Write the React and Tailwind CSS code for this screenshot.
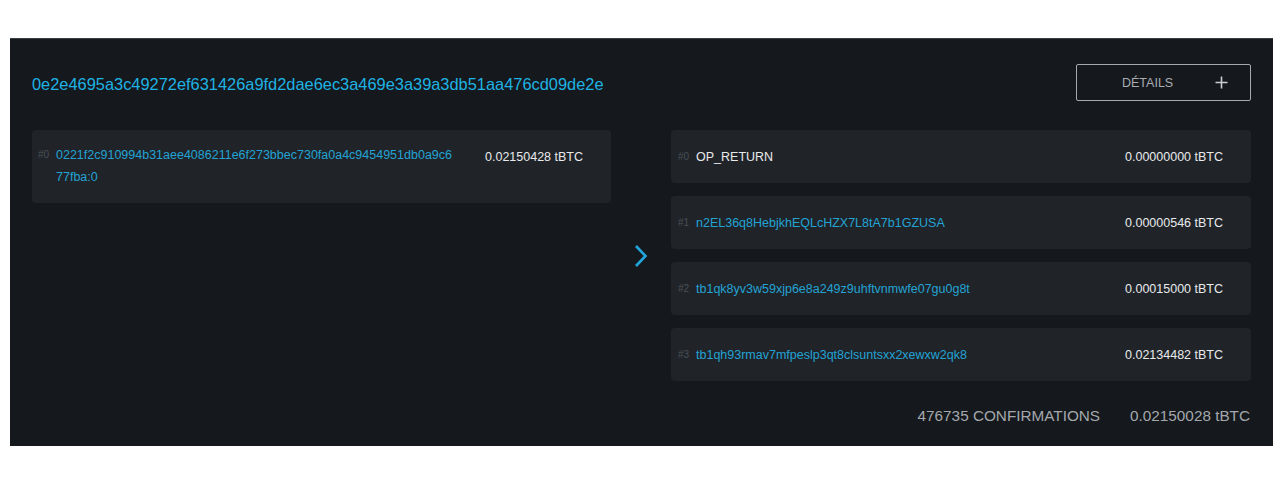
const inputs = [
  {
    n: 0,
    addr: "0221f2c910994b31aee4086211e6f273bbec730fa0a4c9454951db0a9c677fba:0",
    value: "0.02150428",
  },
];

const outputs = [
  { n: 0, addr: "OP_RETURN", value: "0.00000000", plain: true },
  { n: 1, addr: "n2EL36q8HebjkhEQLcHZX7L8tA7b1GZUSA", value: "0.00000546" },
  { n: 2, addr: "tb1qk8yv3w59xjp6e8a249z9uhftvnmwfe07gu0g8t", value: "0.00015000" },
  { n: 3, addr: "tb1qh93rmav7mfpeslp3qt8clsuntsxx2xewxw2qk8", value: "0.02134482" },
];

const Amount = ({ value }) => (
  <span className="shrink-0 text-[12.5px] leading-[22px] text-[#e8eaec]">
    {value} tBTC
  </span>
);

const InputRow = ({ item }) => (
  <div className="flex items-start rounded-[4px] bg-[#202429] pl-[6px] pr-[28px] pt-[14px] pb-[15px]">
    <span className="w-[18px] shrink-0 text-[10px] leading-[22px] text-[#4a4f57]">
      #{item.n}
    </span>
    <span className="w-[399px] shrink-0 break-all text-[12.5px] leading-[22px] text-[#23a3d4]">
      {item.addr}
    </span>
    <span className="ml-[30px]">
      <Amount value={item.value} />
    </span>
  </div>
);

const OutputRow = ({ item }) => (
  <div className="flex h-[53px] items-center rounded-[4px] bg-[#202429] pl-[7px] pr-[28px]">
    <span className="w-[18px] shrink-0 text-[10px] leading-[22px] text-[#4a4f57]">
      #{item.n}
    </span>
    <span
      className={
        item.plain
          ? "flex-1 text-[12.5px] leading-[22px] text-[#e8eaec]"
          : "flex-1 text-[12.5px] leading-[22px] text-[#23a3d4]"
      }
    >
      {item.addr}
    </span>
    <Amount value={item.value} />
  </div>
);

export default function App() {
  return (
    <div
      className="min-h-[485px] bg-white pt-[38px] pl-[10px]"
      style={{ fontFamily: '"Liberation Sans", Arial, sans-serif' }}
    >
      <div className="w-[1263px] border-t border-[#3b3e42] bg-[#15181c] px-[22px] pb-[19px]">
        <div className="flex items-center justify-between pt-[25px]">
          <span className="mt-[3px] text-[16.4px] leading-[22px] text-[#1fb3e3]">
            0e2e4695a3c49272ef631426a9fd2dae6ec3a469e3a39a3db51aa476cd09de2e
          </span>
          <button className="flex h-[37px] w-[175px] items-center justify-between rounded-[2px] border border-[#a6aaaf] pl-[45px] pr-[22px] text-[12.5px] text-[#a9adb3]">
            <span className="mt-[1px]">DÉTAILS</span>
            <svg width="13" height="13" viewBox="0 0 13 13">
              <path d="M6.5 0.5v12M0.5 6.5h12" stroke="#c9ccd0" strokeWidth="1.6" />
            </svg>
          </button>
        </div>

        <div className="mt-[29px] flex">
          <div className="w-[579px] shrink-0">
            {inputs.map((i) => (
              <InputRow key={i.n} item={i} />
            ))}
          </div>
          <div className="flex w-[60px] shrink-0 items-center justify-center">
            <svg width="16" height="24" viewBox="0 0 16 24">
              <path
                d="M3 2l9.5 10L3 22"
                fill="none"
                stroke="#21a6dc"
                strokeWidth="2.6"
              />
            </svg>
          </div>
          <div className="flex flex-1 flex-col gap-[13px]">
            {outputs.map((o) => (
              <OutputRow key={o.n} item={o} />
            ))}
          </div>
        </div>

        <div className="mt-[24px] flex justify-end gap-[30px] pr-[1px] text-[15.3px] leading-[22px] text-[#a4a8ad]">
          <span>476735 CONFIRMATIONS</span>
          <span>0.02150028 tBTC</span>
        </div>
      </div>
    </div>
  );
}
